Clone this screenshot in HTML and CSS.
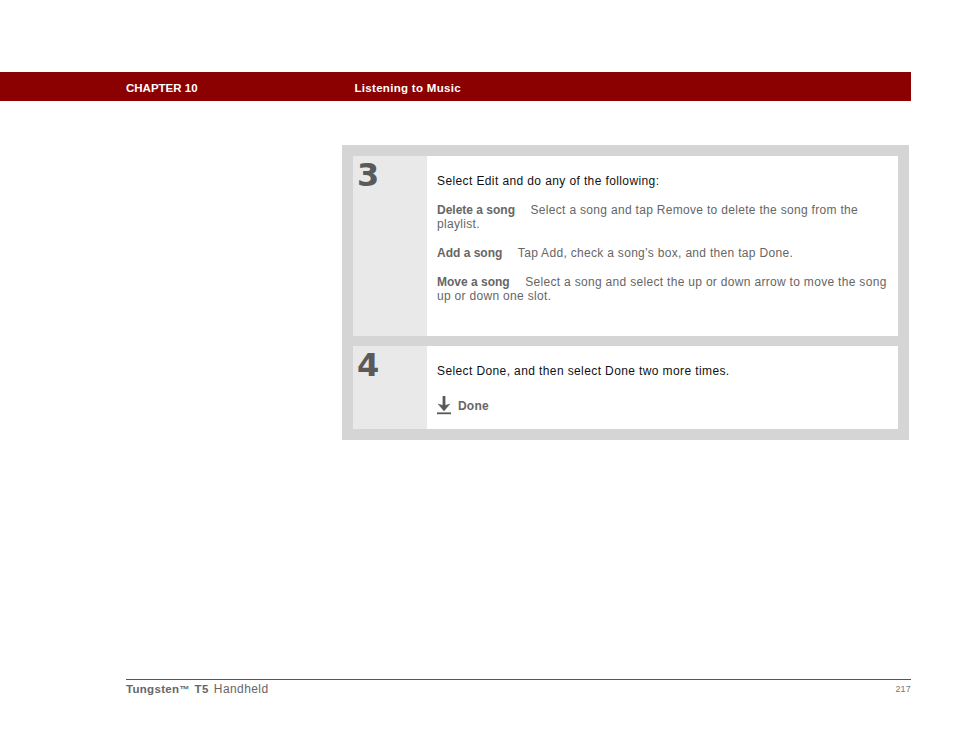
FILE: index.html
```html
<!DOCTYPE html>
<html lang="en">
<head>
<meta charset="utf-8">
<title>Listening to Music</title>
<link rel="stylesheet" href="styles.css">
</head>
<body>
<div class="page">
  <header class="bar">
    <span class="chapter">CHAPTER 10</span>
    <span class="title">Listening to Music</span>
  </header>
  <main class="panel">
    <section class="step step-three">
      <div class="num">3</div>
      <div class="body">
        <p class="lead">Select Edit and do any of the following:</p>
        <p><b>Delete a song</b><span class="gap"></span>Select a song and tap Remove to delete the song from the playlist.</p>
        <p><b>Add a song</b><span class="gap"></span>Tap Add, check a song’s box, and then tap Done.</p>
        <p><b>Move a song</b><span class="gap"></span>Select a song and select the up or down arrow to move the song up or down one slot.</p>
      </div>
    </section>
    <section class="step step-four">
      <div class="num">4</div>
      <div class="body">
        <p class="lead">Select Done, and then select Done two more times.</p>
        <div class="done">
          <svg class="arrow" width="14" height="19" viewBox="0 0 14 19" aria-hidden="true">
            <path d="M7 0V10" stroke="#585858" stroke-width="2.8" fill="none"/>
            <path d="M1.2 8L7 15L12.8 8L9 9.2H5Z" fill="#585858" stroke="#585858" stroke-width="0.5"/>
            <rect x="0" y="16.4" width="14" height="1.8" fill="#585858"/>
          </svg>
          <b>Done</b>
        </div>
      </div>
    </section>
  </main>
  <footer class="foot">
    <span class="book"><b>Tungsten<span class="tm">™</span> T5</b> Handheld</span>
    <span class="page-no">217</span>
  </footer>
</div>
</body>
</html>
```
FILE: styles.css
```css
* { box-sizing: border-box; }
html, body { margin: 0; padding: 0; background: #fff; }
body { font-family: "Liberation Sans", Arial, sans-serif; }
.page { display: flex; flex-direction: column; width: 954px; height: 738px; padding-top: 72px; overflow: hidden; }
.bar { display: flex; align-items: center; width: 911px; height: 29px; padding: 2px 0 0 126px; background: #8b0000; color: #fff; font-size: 11.5px; font-weight: bold; }
.chapter { width: 228.5px; }
.title { letter-spacing: 0.3px; }
.panel { display: flex; flex-direction: column; gap: 10px; width: 567px; margin: 44px 0 0 342px; padding: 11px; background: #d5d5d5; }
.step { display: flex; }
.step-three { height: 180px; }
.step-four { height: 83px; }
.num { width: 74px; padding: 1px 0 0 4px; background: #e9e9e9; color: #5a5a5a; font-family: "DejaVu Sans", sans-serif; font-size: 32px; line-height: 36px; font-weight: bold; }
.body { flex: 1; padding: 18px 10px 0; background: #fff; color: #666; font-size: 12px; line-height: 14px; letter-spacing: 0.31px; }
.body p { margin: 0 0 15px; }
.body b { color: #666; letter-spacing: 0; }
.body .lead { color: #111; letter-spacing: 0.39px; }
.gap { display: inline-block; width: 15.5px; }
.done { display: flex; align-items: center; gap: 7px; margin-top: 18px; }
.done b { letter-spacing: 0.2px; }
.arrow { flex: none; }
.foot { display: flex; justify-content: space-between; align-items: center; width: 785px; margin: auto 0 41px 126px; padding-top: 2px; border-top: 1px solid #555; color: #666; font-size: 12px; line-height: 15px; letter-spacing: 0.41px; word-spacing: 1.5px; }
.foot b { font-size: 11.5px; letter-spacing: 0.3px; }
.tm { font-size: 10px; }
.page-no { font-size: 9px; letter-spacing: 0.2px; color: #777; }
```
